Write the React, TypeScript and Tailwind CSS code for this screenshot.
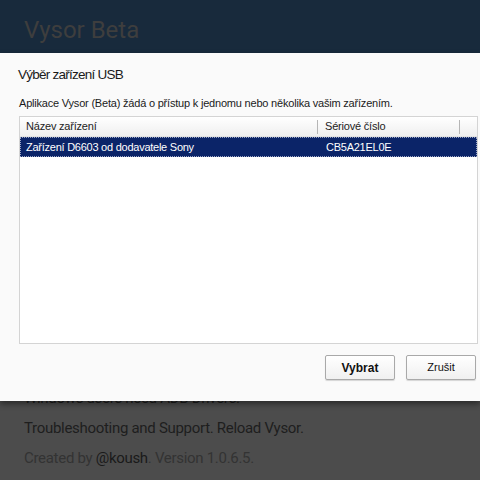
import React from 'react';

const DIALOG_FONT = { fontFamily: '"Liberation Sans", Arial, sans-serif' };

function ListHeader() {
  return (
    <div className="flex h-[20px] items-center border-b border-[#e2e2e2] bg-gradient-to-b from-[#ffffff] to-[#efefef] text-[11px] tracking-[-0.2px] text-[#222]">
      <div className="flex h-full w-[297px] items-center pl-[6px]">Název zařízení</div>
      <div className="h-[14px] w-px bg-[#b5b5b5]" />
      <div className="flex h-full w-[141px] items-center pl-[7px]">Sériové číslo</div>
      <div className="h-[14px] w-px bg-[#b5b5b5]" />
    </div>
  );
}

function DeviceRow() {
  return (
    <div className="flex h-[20px] items-center border border-dotted border-[#9aa4c4] bg-[#0b2468] text-[11px] tracking-[-0.25px] text-white">
      <div className="w-[298px] pl-[5px]">Zařízení D6603 od dodavatele Sony</div>
      <div className="pl-[7px]">CB5A21EL0E</div>
    </div>
  );
}

function DialogButton({ label, bold }: { label: string; bold?: boolean }) {
  return (
    <button
      className={`h-[25px] w-[70px] rounded-[2px] border border-[#a9a9a9] bg-gradient-to-b from-[#ffffff] to-[#f0f0f0] text-[11px] text-[#111] shadow-[0_1px_1px_rgba(0,0,0,0.15)] ${
        bold ? 'text-[12px] font-bold' : ''
      }`}
    >
      {label}
    </button>
  );
}

function UsbDialog() {
  return (
    <div
      className="absolute left-0 top-[53px] flex h-[348px] w-[480px] flex-col bg-[#fafafa] shadow-[0_3px_6px_rgba(0,0,0,0.45)]"
      style={DIALOG_FONT}
    >
      <div className="pl-[18px] pt-[12px] text-[13.5px] leading-[20px] tracking-[-0.75px] text-[#1a1a1a]">
        Výběr zařízení USB
      </div>
      <div className="pl-[19px] pt-[11px] text-[11px] leading-[14px] tracking-[-0.2px] text-[#1a1a1a]">
        Aplikace Vysor (Beta) žádá o přístup k jednomu nebo několika vašim zařízením.
      </div>
      <div className="ml-[19px] mt-[6px] h-[228px] w-[459px] border border-[#d4d4d4] bg-white">
        <ListHeader />
        <DeviceRow />
      </div>
      <div className="mt-[11px] flex justify-end gap-[11px] pr-[4px]">
        <DialogButton label="Vybrat" bold />
        <DialogButton label="Zrušit" />
      </div>
    </div>
  );
}

export default function App() {
  return (
    <div
      className="relative h-[480px] w-[480px] overflow-hidden bg-[#4c4c4c]"
      style={{ fontFamily: 'Roboto, "Noto Sans", sans-serif' }}
    >
      <div className="h-[120px] bg-[#182a3c] px-[24px] pt-[14px]">
        <h1 className="text-[24px] leading-[32px] text-[#3e3e3e]">Vysor Beta</h1>
      </div>
      <div className="px-[24px] pt-[263px] text-[15px] leading-[30px] tracking-[-0.3px]">
        <p className="text-[#1e1e1e]">Windows users need ADB Drivers.</p>
        <p className="text-[#1e1e1e]">Troubleshooting and Support. Reload Vysor.</p>
        <p className="text-[#333]">
          Created by <span className="text-[#1a1a1a]">@koush</span>. Version 1.0.6.5.
        </p>
      </div>
      <UsbDialog />
    </div>
  );
}
